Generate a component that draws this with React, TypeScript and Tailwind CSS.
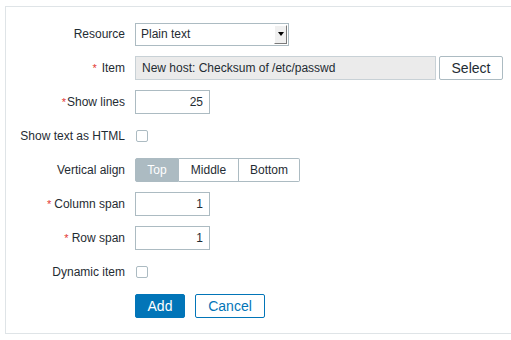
import type { ReactNode } from "react";

const font = { fontFamily: '"Liberation Sans", Arial, sans-serif' };

const Label = ({
  children,
  required,
  gap = "ml-[3px]",
}: {
  children: ReactNode;
  required?: boolean;
  gap?: string;
}) => (
  <div className="w-[119px] shrink-0 text-right text-[12px] text-[#1f2c33] leading-[24px]">
    {required ? (
      <span className="text-[#e33734] text-[11px]">*</span>
    ) : null}
    <span className={required ? gap : ""}>{children}</span>
  </div>
);

const Row = ({ children }: { children: ReactNode }) => (
  <div className="flex items-center gap-[10px] h-[24px]">{children}</div>
);

const NumInput = ({ value }: { value: string }) => (
  <div className="w-[75px] h-[24px] border border-[#acbbc2] bg-white text-right pr-[6px] text-[12px] leading-[22px] text-[#1f2c33]">
    {value}
  </div>
);

const Checkbox = () => (
  <div className="ml-[1px] w-[12px] h-[12px] border border-[#acbbc2] rounded-[2px] bg-white" />
);

export default function App() {
  return (
    <div className="min-h-[340px] bg-white pt-[6px] pl-[5px]" style={font}>
      <div className="border-t border-l border-b border-[#dfe4e7] pt-[15px] pb-[15px] flex flex-col gap-[10px]">
        <Row>
          <Label>Resource</Label>
          <div className="w-[154px] h-[23px] border border-[#acbbc2] bg-white flex items-stretch">
            <div className="flex-1 pl-[5px] text-[12px] leading-[21px] text-[#1f2c33]">
              Plain text
            </div>
            <div className="w-[13px] m-[1px] bg-[#f0f0f0] border-r border-b border-[#7a7a7a] border-t border-l border-t-[#ffffff] border-l-[#ffffff] flex items-center justify-center">
              <div className="w-0 h-0 border-l-[3px] border-r-[3px] border-t-[4px] border-l-transparent border-r-transparent border-t-black" />
            </div>
          </div>
        </Row>
        <Row>
          <Label required gap="ml-[5px]">
            Item
          </Label>
          <div className="w-[301px] h-[24px] border border-[#c8d1d6] bg-[#ebebeb] pl-[6px] text-[12px] leading-[22px] text-[#1f2c33]">
            New host: Checksum of /etc/passwd
          </div>
          <div className="-ml-[7px] w-[64px] h-[24px] border border-[#acbbc2] rounded-[2px] bg-white text-center text-[14px] leading-[22px] text-[#1f2c33]">
            Select
          </div>
        </Row>
        <Row>
          <Label required gap="ml-[1px]">
            Show lines
          </Label>
          <NumInput value="25" />
        </Row>
        <Row>
          <Label>Show text as HTML</Label>
          <Checkbox />
        </Row>
        <Row>
          <Label>Vertical align</Label>
          <div className="flex h-[24px] text-[12px] leading-[22px] text-[#1f2c33]">
            <div className="w-[44px] bg-[#acbbc2] border border-[#acbbc2] rounded-l-[2px] text-white text-center">
              Top
            </div>
            <div className="w-[60px] border-y border-r border-[#acbbc2] bg-white text-center">
              Middle
            </div>
            <div className="w-[61px] border-y border-r border-[#acbbc2] rounded-r-[2px] bg-white text-center">
              Bottom
            </div>
          </div>
        </Row>
        <Row>
          <Label required>Column span</Label>
          <NumInput value="1" />
        </Row>
        <Row>
          <Label required>Row span</Label>
          <NumInput value="1" />
        </Row>
        <Row>
          <Label>Dynamic item</Label>
          <Checkbox />
        </Row>
        <Row>
          <div className="w-[119px] shrink-0" />
          <div className="w-[50px] h-[24px] bg-[#0275b8] border border-[#0275b8] rounded-[2px] text-white text-center text-[14px] leading-[22px]">
            Add
          </div>
          <div className="w-[70px] h-[24px] bg-white border border-[#0275b8] rounded-[2px] text-[#0275b8] text-center text-[14px] leading-[22px]">
            Cancel
          </div>
        </Row>
      </div>
    </div>
  );
}
